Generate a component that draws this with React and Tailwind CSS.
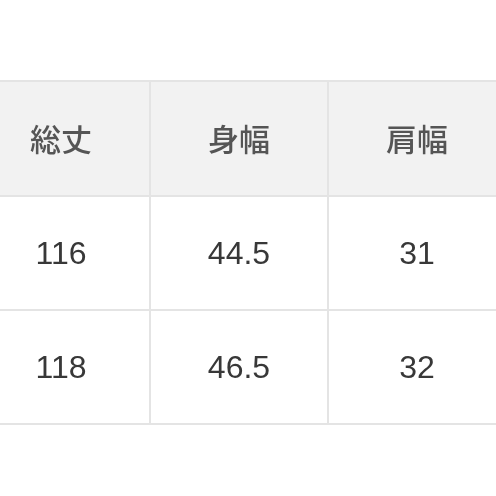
export default function App() {
  const header = ["総丈", "身幅", "肩幅"];
  const rows = [
    ["116", "44.5", "31"],
    ["118", "46.5", "32"],
  ];
  return (
    <div className="w-[496px] h-[496px] bg-white overflow-hidden pt-[80px]">
      <div className="ml-[-27px] w-[534px] grid grid-cols-[178px_178px_178px] border-t-2 border-[#e4e4e4] blur-[0.4px]">
        {header.map((h) => (
          <div
            key={h}
            className="h-[115px] bg-[#f2f2f2] border-r-2 border-b-2 border-[#e4e4e4] flex items-center justify-center text-[31px] font-medium text-[#555555] font-['Noto_Sans_CJK_JP',sans-serif]"
          >
            {h}
          </div>
        ))}
        {rows.map((r, i) =>
          r.map((c, j) => (
            <div
              key={i + "-" + j}
              className="h-[114px] bg-white border-r-2 border-b-2 border-[#e4e4e4] flex items-center justify-center text-[32px] text-[#383838] font-['Liberation_Sans',Arial,sans-serif]"
            >
              {c}
            </div>
          ))
        )}
      </div>
    </div>
  );
}
